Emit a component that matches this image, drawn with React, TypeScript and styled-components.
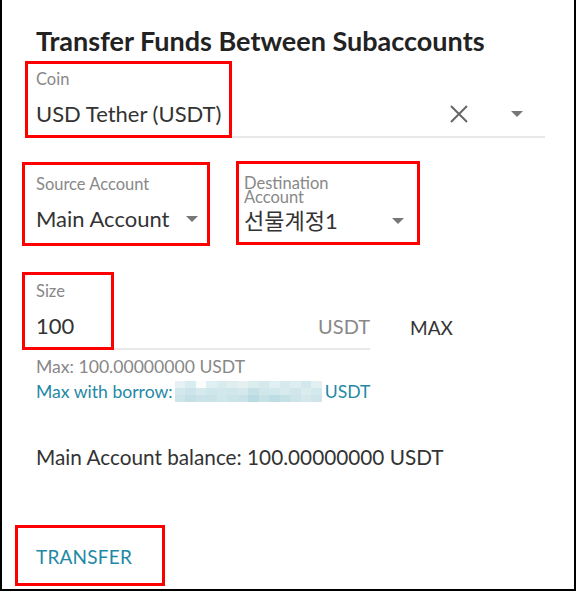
import React from "react";
import styled, { createGlobalStyle } from "styled-components";

const GlobalStyle = createGlobalStyle`
  body {
    margin: 0;
    background: #fff;
    font-family: Lato, "Noto Sans CJK KR", sans-serif;
  }
`;

const Dialog = styled.div`
  position: relative;
  box-sizing: border-box;
  width: 576px;
  height: 591px;
  border: 2px solid #000;
  border-top: none;
  padding: 25px 29px 0 34px;
  color: #333;
`;

const Title = styled.h2`
  margin: 0;
  font-size: 27px;
  line-height: 32px;
  font-weight: 700;
  color: #222;
`;

const Field = styled.div<{ $width?: number }>`
  display: flex;
  flex-direction: column;
  width: ${(p) => (p.$width ? `${p.$width}px` : "auto")};
  flex: ${(p) => (p.$width ? "none" : "1")};
  border-bottom: ${(p) => (p.$width ? "none" : "2px solid #e8e8e8")};
`;

const Label = styled.label<{ $narrow?: boolean }>`
  display: block;
  height: 18px;
  font-size: 16.5px;
  line-height: ${(p) => (p.$narrow ? "14px" : "16px")};
  color: #888;
  max-width: ${(p) => (p.$narrow ? "110px" : "none")};
`;

const InputRow = styled.div<{ $drop?: number }>`
  display: flex;
  align-items: center;
  height: 24px;
  margin-top: ${(p) => 13 + (p.$drop ?? 0)}px;
  padding-bottom: ${(p) => 10 - (p.$drop ?? 0)}px;
`;

const Value = styled.span`
  flex: 1;
  font-size: 22px;
  line-height: 24px;
  color: #333;
  white-space: nowrap;
`;

const Adornment = styled.span`
  font-size: 20px;
  color: #888;
`;

const Arrow = styled.span<{ $inset?: number }>`
  width: 0;
  height: 0;
  border-left: 6px solid transparent;
  border-right: 6px solid transparent;
  border-top: 6px solid #777;
  margin: 0 ${(p) => p.$inset ?? 4}px 0 8px;
`;

const ClearIcon = styled.svg`
  width: 20px;
  height: 20px;
  margin-right: 34px;
`;

const CoinBlock = styled.div`
  margin-top: 14px;
  display: flex;
`;

const AccountRow = styled.div`
  display: flex;
  gap: 42px;
  margin-top: 38px;
`;

const SizeRow = styled.div`
  display: flex;
  margin-top: 42px;
`;

const SizeField = styled(Field)`
  flex: none;
  width: 334px;
  border-bottom: 2px solid #e8e8e8;
`;

const MaxButton = styled.button`
  align-self: flex-end;
  margin: 0 0 11px 40px;
  padding: 0;
  border: none;
  background: none;
  font-family: inherit;
  font-size: 19px;
  line-height: 23px;
  color: #333;
`;

const Helpers = styled.div`
  margin-top: 4px;
`;

const Helper = styled.div<{ $link?: boolean }>`
  display: flex;
  align-items: center;
  font-size: 17.6px;
  line-height: 25px;
  color: ${(p) => (p.$link ? "#1f89a6" : "#888")};
`;

const Mosaic = styled.span`
  display: inline-grid;
  grid-template-columns: repeat(14, 10.5px);
  grid-template-rows: repeat(3, 7.3px);
  margin: 0 3px 0 2px;
`;

const Cell = styled.span<{ $c: string }>`
  background: ${(p) => p.$c};
`;

const Balance = styled.p`
  margin: 41px 0 0;
  font-size: 20.75px;
  line-height: 24px;
  color: #333;
`;

const TransferButton = styled.button`
  display: block;
  margin-top: 76px;
  padding: 0;
  border: none;
  background: none;
  font-family: inherit;
  font-size: 19px;
  line-height: 23px;
  letter-spacing: 0.2px;
  color: #1f89a6;
`;

const RedBox = styled.div`
  position: absolute;
  box-sizing: border-box;
  border: 3px solid #ff0000;
  pointer-events: none;
`;

const mosaic = [
  "#e6f1f3", "#d9ecef", "#fbfdfd", "#e0eff2", "#d8ebee", "#dfeeee", "#e6f0f1", "#dcedf0", "#d5e9ec", "#e0eff2", "#d6eaee", "#deeef0", "#d3e8ec", "#e2f0f2",
  "#d2e8ec", "#cde5ea", "#d6eaee", "#cfe6ea", "#d2e7eb", "#cfe6eb", "#d5e9ed", "#c5e1e7", "#cfe6ea", "#d3e8ec", "#d7eaee", "#d0e6ea", "#dbecef", "#d4e9ed",
  "#cde4e9", "#c4e0e6", "#cbe3e8", "#c9e2e7", "#cfe6ea", "#cbe4e8", "#c8e2e7", "#b9dbe2", "#c7e1e6", "#bcdde4", "#c6e1e6", "#cde4e9", "#d5e9ec", "#cfe5ea",
];

const boxes = [
  { left: 23, top: 61, width: 207, height: 77 },
  { left: 20, top: 162, width: 188, height: 84 },
  { left: 234, top: 161, width: 184, height: 84 },
  { left: 20, top: 272, width: 92, height: 78 },
  { left: 13, top: 525, width: 150, height: 61 },
];

export default function App() {
  return (
    <>
      <GlobalStyle />
      <Dialog>
        <Title>Transfer Funds Between Subaccounts</Title>

        <CoinBlock>
          <Field>
            <Label>Coin</Label>
            <InputRow>
              <Value>USD Tether (USDT)</Value>
              <ClearIcon viewBox="0 0 20 20">
                <path d="M2 2 L18 18 M18 2 L2 18" stroke="#666" strokeWidth="2" />
              </ClearIcon>
              <Arrow $inset={22} />
            </InputRow>
          </Field>
        </CoinBlock>

        <AccountRow>
          <Field $width={166}>
            <Label>Source Account</Label>
            <InputRow>
              <Value>Main Account</Value>
              <Arrow />
            </InputRow>
          </Field>
          <Field $width={164}>
            <Label $narrow>Destination Account</Label>
            <InputRow $drop={2}>
              <Value>선물계정1</Value>
              <Arrow />
            </InputRow>
          </Field>
        </AccountRow>

        <SizeRow>
          <SizeField>
            <Label>Size</Label>
            <InputRow>
              <Value>100</Value>
              <Adornment>USDT</Adornment>
            </InputRow>
          </SizeField>
          <MaxButton>MAX</MaxButton>
        </SizeRow>

        <Helpers>
          <Helper>Max: 100.00000000 USDT</Helper>
          <Helper $link>
            Max with borrow:
            <Mosaic>
              {mosaic.map((c, i) => (
                <Cell key={i} $c={c} />
              ))}
            </Mosaic>
            USDT
          </Helper>
        </Helpers>

        <Balance>Main Account balance: 100.00000000 USDT</Balance>

        <TransferButton>TRANSFER</TransferButton>

        {boxes.map((b, i) => (
          <RedBox key={i} style={b} />
        ))}
      </Dialog>
    </>
  );
}
